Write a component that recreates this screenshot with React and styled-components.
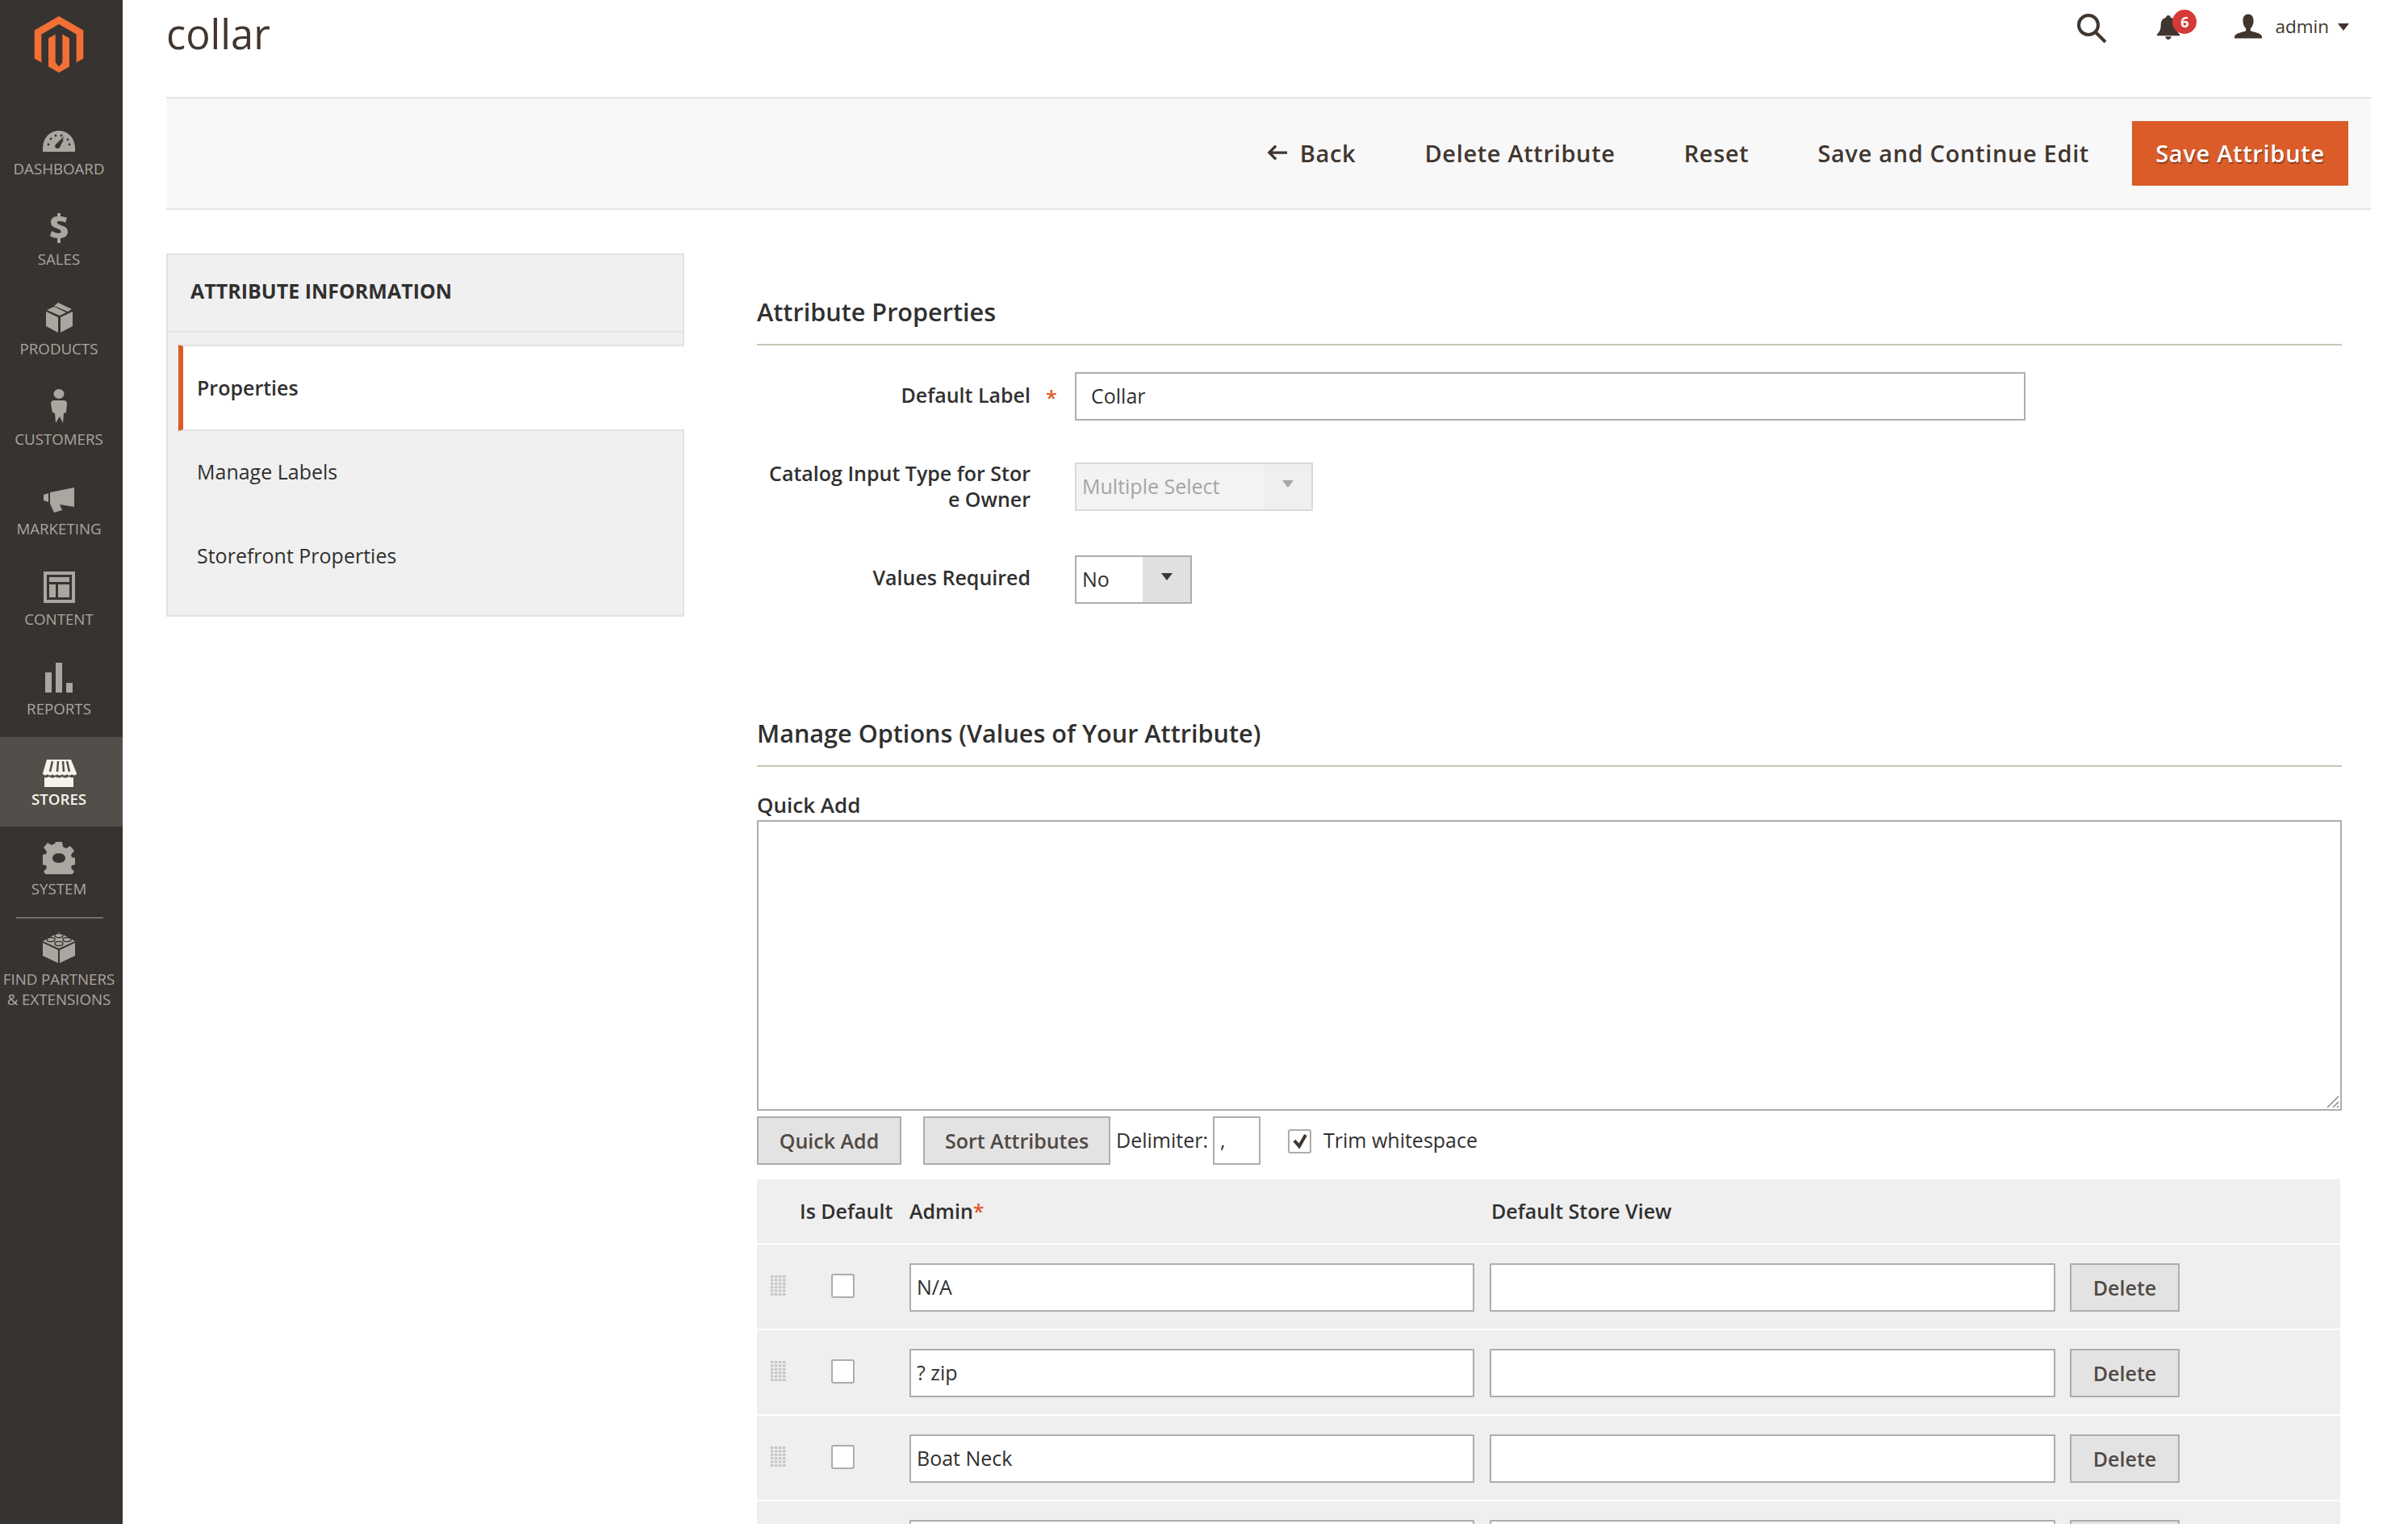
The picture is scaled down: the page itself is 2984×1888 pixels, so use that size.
import React from "react";
import styled, { createGlobalStyle } from "styled-components";

const GlobalStyle = createGlobalStyle`
  html, body {
    margin: 0;
    padding: 0;
    background: #fff;
  }
  body {
    font-family: "Open Sans", "Liberation Sans", sans-serif;
    color: #303030;
  }
  * { box-sizing: border-box; }
`;

// page frame
const Page = styled.div`
  display: flex;
  width: 2984px;
  height: 1888px;
  overflow: hidden;
`;
const Sidebar = styled.nav`
  width: 152px;
  flex: none;
  background: #373330;
`;
const LogoBox = styled.div`
  height: 132px;
  padding: 20px 6px 0 0;
  display: flex;
  justify-content: center;
  svg { width: 70px; height: 70px; fill: #f26f36; }
`;
const MenuItem = styled.div`
  height: 111.5px;
  padding: 21px 6px 0 0;
  display: flex;
  flex-direction: column;
  align-items: center;
  background: ${props => props.$active ? "#524e49" : "transparent"};
  color: ${props => props.$active ? "#f7f3eb" : "#aaa6a0"};
  font-size: 18.7px;
  font-weight: ${props => props.$active ? 600 : 400};
`;
const MenuIcon = styled.div`
  height: 44px;
  padding-bottom: ${props => props.$pad ?? 8}px;
  display: flex;
  align-items: flex-end;
  justify-content: center;
  svg { display: block; fill: currentColor; }
`;
const MenuLabel = styled.div`
  line-height: 24px;
  text-align: center;
  white-space: nowrap;
`;
const MenuDivider = styled.div`
  height: 2px;
  margin: 0 24px 0 20px;
  background: #736e69;
`;
const PartnerItem = styled(MenuItem)`
  height: auto;
  padding-top: 18px;
  ${MenuLabel} { line-height: 25px; }
`;

const Main = styled.main`
  flex: 1;
  min-width: 0;
  padding-left: 54px;
`;
const TopBar = styled.header`
  height: 120px;
  display: flex;
  justify-content: space-between;
  padding-right: 73px;
`;
const Title = styled.h1`
  margin: 8px 0 0 0;
  font-size: 50.5px;
  line-height: 68px;
  font-weight: 400;
  color: #41362f;
`;
const TopActions = styled.div`
  display: flex;
  align-items: flex-start;
  padding-top: 16px;
  color: #41362f;
`;
const SearchButton = styled.div`
  width: 38px;
  height: 38px;
  margin-right: 62px;
`;
const BellWrap = styled.div`
  position: relative;
  width: 30px;
  height: 34px;
  margin: 2px 66px 0 0;
`;
const Badge = styled.span`
  position: absolute;
  top: -6px;
  left: 19px;
  width: 30px;
  height: 30px;
  border-radius: 50%;
  background: #d53a36;
  color: #fff;
  font-size: 18px;
  font-weight: 700;
  line-height: 30px;
  text-align: center;
`;
const UserIcon = styled.svg`
  width: 34px;
  height: 31px;
  margin: 1px 16px 0 0;
  fill: #41362f;
`;
const UserName = styled.div`
  display: flex;
  align-items: center;
  gap: 11px;
  font-size: 22.5px;
  line-height: 34px;
`;
const Caret = styled.span`
  width: 0;
  height: 0;
  border-left: 7px solid transparent;
  border-right: 7px solid transparent;
  border-top: 9px solid ${props => props.$color || "#41362f"};
`;

const ActionBar = styled.div`
  height: 140px;
  width: 2732px;
  display: flex;
  align-items: center;
  justify-content: flex-end;
  padding: 0 28px 0 0;
  background: #f8f8f8;
  border-top: 2px solid #e3e3e3;
  border-bottom: 2px solid #e3e3e3;
`;
const ActionLink = styled.div`
  display: flex;
  align-items: center;
  gap: 15px;
  margin-right: ${props => props.$gap}px;
  padding-bottom: 2px;
  color: #41362f;
  font-size: 29px;
  font-weight: 600;
  letter-spacing: 0.65px;
  white-space: nowrap;
`;
const SaveButton = styled.div`
  width: 268px;
  height: 80px;
  padding-bottom: 2px;
  display: flex;
  align-items: center;
  justify-content: center;
  background: #db5c28;
  color: #fff;
  font-size: 29px;
  font-weight: 600;
  letter-spacing: 0.7px;
  text-shadow: 1px 2px 0 #8f3d1c;
`;

const Columns = styled.div`
  display: flex;
  gap: 90px;
  margin-top: 54px;
  padding-right: 82px;
`;
const Tabs = styled.aside`
  width: 642px;
  height: 450px;
  flex: none;
  background: #f0f0f0;
  border: 2px solid #e3e3e3;
`;
const TabsTitle = styled.div`
  height: 96px;
  padding: 26px 0 0 28px;
  border-bottom: 2px solid #e3e3e3;
  color: #303030;
  font-size: 25px;
  line-height: 36px;
  font-weight: 700;
  white-space: nowrap;
`;
const TabItem = styled.div`
  margin-top: ${props => props.$first ? "15px" : "0"};
  margin-left: ${props => props.$active ? "13px" : "19px"};
  margin-right: ${props => props.$active ? "-2px" : "0"};
  height: ${props => props.$active ? "107px" : "104px"};
  display: flex;
  align-items: center;
  padding-left: 17px;
  padding-bottom: ${props => props.$active ? "2px" : "4px"};
  background: ${props => props.$active ? "#fff" : "transparent"};
  font-size: 25px;
  font-weight: ${props => props.$active ? 600 : 400};
  ${props => props.$active && `
    border-left: 6px solid #db5c28;
    border-top: 2px solid #e3e3e3;
    border-bottom: 2px solid #e3e3e3;
  `}
`;

const Form = styled.section`
  flex: 1;
  min-width: 0;
`;
const SectionTitle = styled.h2`
  margin: ${props => props.$top}px 0 0;
  padding-bottom: 20px;
  border-bottom: 2px solid #cac5b8;
  font-size: 30.6px;
  line-height: 40px;
  font-weight: 600;
  color: #303030;
`;
const FieldRow = styled.div`
  display: grid;
  grid-template-columns: 339px 55px 1fr;
  margin-top: ${props => props.$top}px;
`;
const FieldLabel = styled.label`
  margin-top: ${props => props.$offset}px;
  text-align: right;
  font-size: 25px;
  line-height: 32px;
  font-weight: 600;
`;
const Required = styled.span`
  margin-top: 15px;
  padding-left: 19px;
  color: #e0582a;
  font-size: 25px;
  line-height: 32px;
  font-weight: 600;
`;
const TextInput = styled.input`
  display: block;
  width: ${props => props.$width || "100%"};
  height: ${props => props.$height || "60px"};
  padding: 0 0 2px ${props => props.$pad || "8px"};
  border: 2px solid #adadad;
  border-radius: 1px;
  background: #fff;
  outline: none;
  color: #303030;
  font-family: inherit;
  font-size: 25px;
`;
const SelectBox = styled.div`
  display: flex;
  width: ${props => props.$width}px;
  height: 60px;
  border: 2px solid ${props => props.$disabled ? "#d9d9d9" : "#adadad"};
  background: ${props => props.$disabled ? "#f3f3f3" : "#fff"};
  color: ${props => props.$disabled ? "#a5a5a5" : "#303030"};
  font-size: 25px;
  line-height: 54px;
`;
const SelectValue = styled.div`
  flex: 1;
  padding-left: 7px;
  white-space: nowrap;
`;
const SelectArrow = styled.div`
  width: ${props => props.$width}px;
  display: flex;
  justify-content: center;
  padding-top: 20px;
  background: ${props => props.$disabled ? "#efefef" : "#e0e0e0"};
`;
const QuickLabel = styled.div`
  margin-top: 34px;
  font-size: 26px;
  line-height: 26px;
  font-weight: 600;
`;
const QuickArea = styled.div`
  position: relative;
  height: 360px;
  margin-top: 6px;
  border: 2px solid #adadad;
  border-radius: 1px;
  background: #fff;
`;
const ResizeHandle = styled.svg`
  position: absolute;
  right: 1px;
  bottom: 1px;
  width: 18px;
  height: 18px;
`;
const QuickToolbar = styled.div`
  display: flex;
  align-items: flex-start;
  margin-top: 7px;
`;
const GreyButton = styled.div`
  height: ${props => props.$height || 60}px;
  width: ${props => props.$width}px;
  margin-right: ${props => props.$gap || 0}px;
  display: flex;
  align-items: center;
  justify-content: center;
  background: #e3e3e3;
  border: 2px solid #adadad;
  color: #514943;
  font-size: 25px;
  font-weight: 600;
`;
const InlineText = styled.span`
  margin: 0 ${props => props.$right || 0}px 0 ${props => props.$left || 0}px;
  font-size: 25px;
  line-height: 58px;
  white-space: nowrap;
`;
const CheckBox = styled.span`
  flex: none;
  display: flex;
  align-items: center;
  justify-content: center;
  width: 29px;
  height: 30px;
  border: 2px solid #adadad;
  border-radius: 3px;
  background: #fff;
  svg { width: 20px; height: 20px; fill: none; stroke: #41362f; stroke-width: 4; }
`;
const TrimCheck = styled(CheckBox)`
  margin: 16px 0 0 34px;
`;

const OptionsHead = styled.div`
  display: grid;
  grid-template-columns: 53px 136px 700px 21px 1fr;
  height: 79px;
  margin-top: 18px;
  margin-right: 2px;
  padding-bottom: 2px;
  align-items: center;
  background: #efefef;
  font-size: 25px;
  font-weight: 600;
  white-space: nowrap;
`;
const OptionRow = styled.div`
  display: grid;
  grid-template-columns: 53px 136px 700px 19px 701px 18px 136px;
  height: 104px;
  margin-top: 2px;
  margin-right: 2px;
  padding-top: 23px;
  align-items: start;
  background: #efefef;
  &:first-of-type { margin-top: 3px; }
`;
const Grip = styled.svg`
  width: 20px;
  height: 26px;
  margin: 15px 0 0 17px;
  fill: #c5c5c5;
`;
const RowCheck = styled(CheckBox)`
  margin: 13px 0 0 39px;
`;
const Star = styled.span`
  color: #e0582a;
`;

function Icon({ w, h, children }) {
  return <svg width={w} height={h} viewBox={`0 0 ${w} ${h}`}>{children}</svg>;
}

const menu = [
  {
    label: "DASHBOARD",
    icon: (
      <Icon w={40} h={28}>
        <path fillRule="evenodd" d="M0 27v-6C1 9 9 1 20 1s19 8 20 20v6ZM26 8l-9 9c-3 2-2 6 1 6 2 0 3-1 4-3Z" />
        <path d="M27 11l-6 9c-1 1-3 0-3-1Z" fill="#373330" />
        <g fill="#373330">
          <circle cx="7" cy="18" r="1.4" /><circle cx="10" cy="11" r="1.4" /><circle cx="16" cy="7" r="1.4" />
          <circle cx="23" cy="7" r="1.4" /><circle cx="33" cy="18" r="1.4" /><circle cx="31" cy="12" r="1.4" />
        </g>
      </Icon>
    ),
  },
  {
    label: "SALES",
    icon: (
      <Icon w={22} h={37}>
        <path d="M9 0h4v4c3 0 6 1 8 2l-2 6c-3-2-6-2-8-2-3 0-3 3 0 4 5 2 11 3 11 9 0 5-4 8-9 8v6H9v-6c-4 0-7-1-9-3l2-6c3 2 6 3 9 3s4-3 0-5C6 18 1 17 1 11c0-4 3-7 8-7Z" />
      </Icon>
    ),
  },
  {
    label: "PRODUCTS",
    icon: (
      <Icon w={33} h={37}>
        <path d="M0 11l15 7v19L0 29ZM33 11v18l-15 8V18ZM10 5l15 7-8 4L1 9ZM15 0l17 8-5 3-17-7Z" />
      </Icon>
    ),
  },
  {
    label: "CUSTOMERS",
    icon: (
      <Icon w={20} h={42}>
        <ellipse cx="10" cy="6" rx="6.5" ry="6" />
        <path d="M4 14h12c3 0 4 2 4 4l-1 11-3 1-1 12-4-8-5 8-1-12-3-1L0 18c0-2 1-4 4-4Z" />
      </Icon>
    ),
  },
  {
    label: "MARKETING",
    icon: (
      <Icon w={38} h={31}>
        <path d="M0 9l6-2v11l-6-2ZM8 6l30-6v24l-18-3 3 7-10 3-5-11H8Z" />
      </Icon>
    ),
  },
  {
    label: "CONTENT",
    icon: (
      <Icon w={39} h={39}>
        <path fillRule="evenodd" d="M0 0h39v39H0ZM4 4v31h31V4Z" />
        <path d="M7 7h25v6H7ZM7 16h8v16H7ZM18 16h14v16H18Z" />
      </Icon>
    ),
  },
  {
    label: "REPORTS",
    icon: (
      <Icon w={34} h={37}>
        <path d="M0 12h8v25H0ZM13 0h8v37h-8ZM26 25h8v12h-8Z" />
      </Icon>
    ),
  },
  {
    label: "STORES",
    active: true,
    pad: 3,
    icon: (
      <Icon w={44} h={34}>
        <path d="M7 0h30l7 17c0 3-5 3-6 1-1 2-5 2-6 0-1 2-5 2-6 0-1 2-5 2-6 0-1 2-5 2-6 0-1 2-5 2-6 0-1 2-6 2-6-1Z" />
        <path d="M4 22c2 1 4 0 6-1 2 2 6 2 8 0 2 2 6 2 8 0 2 2 6 2 8 0 2 1 4 2 6 1v12H4Z" />
        <path d="M14 2l-3 13M21 2l-1 13M27 2l1 13M32 2l3 13" stroke="#524e49" strokeWidth="2.5" fill="none" />
      </Icon>
    ),
  },
  {
    label: "SYSTEM",
    pad: 6,
    icon: (
      <Icon w={40} h={40}>
        <path fillRule="evenodd" d="M16 0h8l1 6 4 2 5-3 5 6-4 5 1 3 6 1v8l-6 1-1 3 4 5-5 6-5-3-4 2-1 6h-8l-1-6-4-2-5 3-5-6 4-5-1-3-6-1V16l6-1 1-3-4-5 5-6 5 3 4-2ZM20 14c-5 0-8 3-8 6s3 6 8 6 8-3 8-6-3-6-8-6Z" />
      </Icon>
    ),
  },
];

function OptionLine({ value }) {
  return (
    <OptionRow>
      <Grip viewBox="0 0 20 26">
        {[0, 1, 2, 3, 4, 5].map(r => [0, 1, 2, 3].map(c => (
          <rect key={`${r}-${c}`} x={c * 5} y={r * 4.4} width="3.5" height="3" />
        )))}
      </Grip>
      <RowCheck />
      <TextInput defaultValue={value} $pad="7px" />
      <span />
      <TextInput />
      <span />
      <GreyButton $width={136}>Delete</GreyButton>
    </OptionRow>
  );
}

export default function App() {
  return (
    <Page>
      <GlobalStyle />
      <Sidebar>
        <LogoBox>
          <svg viewBox="0 0 24 24">
            <path d="M12 24l-4.455-2.572v-12l2.97-1.715v12.001L12 21.429l1.485-1.715V7.713l2.97 1.715v12L12 24zM22.391 6v12l-2.969 1.714V7.713L12 3.43 4.574 7.713v12.001L1.609 18V6L12 0l10.391 6z" />
          </svg>
        </LogoBox>
        {menu.map(item => (
          <MenuItem key={item.label} $active={item.active}>
            <MenuIcon $pad={item.pad}>{item.icon}</MenuIcon>
            <MenuLabel>{item.label}</MenuLabel>
          </MenuItem>
        ))}
        <MenuDivider />
        <PartnerItem>
          <MenuIcon $pad={7}>
            <Icon w={40} h={39}>
              <path d="M0 14l19 9v16L0 30ZM40 14v16L21 39V23Z" />
              <path d="M20 1l20 11-20 9L0 12Z" />
              <g fill="#aaa6a0" stroke="#373330" strokeWidth="1.4">
                <ellipse cx="20" cy="5" rx="5" ry="2.6" /><ellipse cx="10" cy="10" rx="5" ry="2.6" />
                <ellipse cx="30" cy="10" rx="5" ry="2.6" /><ellipse cx="20" cy="15" rx="5" ry="2.6" />
              </g>
            </Icon>
          </MenuIcon>
          <MenuLabel>FIND PARTNERS<br />&amp; EXTENSIONS</MenuLabel>
        </PartnerItem>
      </Sidebar>

      <Main>
        <TopBar>
          <Title>collar</Title>
          <TopActions>
            <SearchButton>
              <svg width="38" height="38" viewBox="0 0 38 38" fill="none" stroke="#41362f" strokeWidth="4">
                <circle cx="15" cy="15" r="12" />
                <path d="M24 24l12 12" />
              </svg>
            </SearchButton>
            <BellWrap>
              <svg width="28" height="32" viewBox="0 0 30 32" fill="#41362f">
                <path d="M15 0c2 0 3 1 3 3 5 1 7 5 7 10 0 6 2 9 5 12v2H0v-2c3-3 5-6 5-12 0-5 2-9 7-10 0-2 1-3 3-3ZM11 28h8c0 2-2 4-4 4s-4-2-4-4Z" />
              </svg>
              <Badge>6</Badge>
            </BellWrap>
            <UserIcon viewBox="0 0 36 32">
              <path d="M18 0c5 0 7 4 7 9 0 4-2 8-4 10v3c5 2 15 3 15 8v2H0v-2c0-5 10-6 15-8v-3c-2-2-4-6-4-10 0-5 2-9 7-9Z" />
            </UserIcon>
            <UserName>admin <Caret /></UserName>
          </TopActions>
        </TopBar>

        <ActionBar>
          <ActionLink $gap={85}>
            <svg width="26" height="22" viewBox="0 0 28 22" fill="none" stroke="#41362f" strokeWidth="3.5">
              <path d="M12 2L3 11l9 9M3 11h24" />
            </svg>
            Back
          </ActionLink>
          <ActionLink $gap={85}>Delete Attribute</ActionLink>
          <ActionLink $gap={85}>Reset</ActionLink>
          <ActionLink $gap={53}>Save and Continue Edit</ActionLink>
          <SaveButton>Save Attribute</SaveButton>
        </ActionBar>

        <Columns>
          <Tabs>
            <TabsTitle>ATTRIBUTE INFORMATION</TabsTitle>
            <TabItem $first $active>Properties</TabItem>
            <TabItem>Manage Labels</TabItem>
            <TabItem>Storefront Properties</TabItem>
          </Tabs>

          <Form>
            <SectionTitle $top={52}>Attribute Properties</SectionTitle>
            <FieldRow $top={33}>
              <FieldLabel $offset={12}>Default Label</FieldLabel>
              <Required>*</Required>
              <TextInput defaultValue="Collar" $width="1178px" $pad="18px" />
            </FieldRow>
            <FieldRow $top={52}>
              <FieldLabel $offset={-3}>Catalog Input Type for Stor<br />e Owner</FieldLabel>
              <span />
              <SelectBox $width={295} $disabled>
                <SelectValue>Multiple Select</SelectValue>
                <SelectArrow $width={58} $disabled><Caret $color="#a5a5a5" /></SelectArrow>
              </SelectBox>
            </FieldRow>
            <FieldRow $top={54}>
              <FieldLabel $offset={11}>Values Required</FieldLabel>
              <span />
              <SelectBox $width={145}>
                <SelectValue>No</SelectValue>
                <SelectArrow $width={59}><Caret /></SelectArrow>
              </SelectBox>
            </FieldRow>

            <SectionTitle $top={140}>Manage Options (Values of Your Attribute)</SectionTitle>
            <QuickLabel>Quick Add</QuickLabel>
            <QuickArea>
              <ResizeHandle viewBox="0 0 18 18" stroke="#8a8a8a" strokeWidth="1.5">
                <path d="M3 17L17 3M10 17l7-7M15 17l2-2" />
              </ResizeHandle>
            </QuickArea>
            <QuickToolbar>
              <GreyButton $width={179} $gap={27}>Quick Add</GreyButton>
              <GreyButton $width={232}>Sort Attributes</GreyButton>
              <InlineText $left={7} $right={6}>Delimiter:</InlineText>
              <TextInput defaultValue="," $width="59px" $pad="7px" />
              <TrimCheck>
                <svg viewBox="0 0 20 20"><path d="M3 9l6 7 8-14" /></svg>
              </TrimCheck>
              <InlineText $left={15}>Trim whitespace</InlineText>
            </QuickToolbar>

            <OptionsHead>
              <span />
              <span>Is Default</span>
              <span>Admin<Star>*</Star></span>
              <span />
              <span>Default Store View</span>
            </OptionsHead>
            <OptionLine value="N/A" />
            <OptionLine value="? zip" />
            <OptionLine value="Boat Neck" />
            <OptionLine value="" />
          </Form>
        </Columns>
      </Main>
    </Page>
  );
}
